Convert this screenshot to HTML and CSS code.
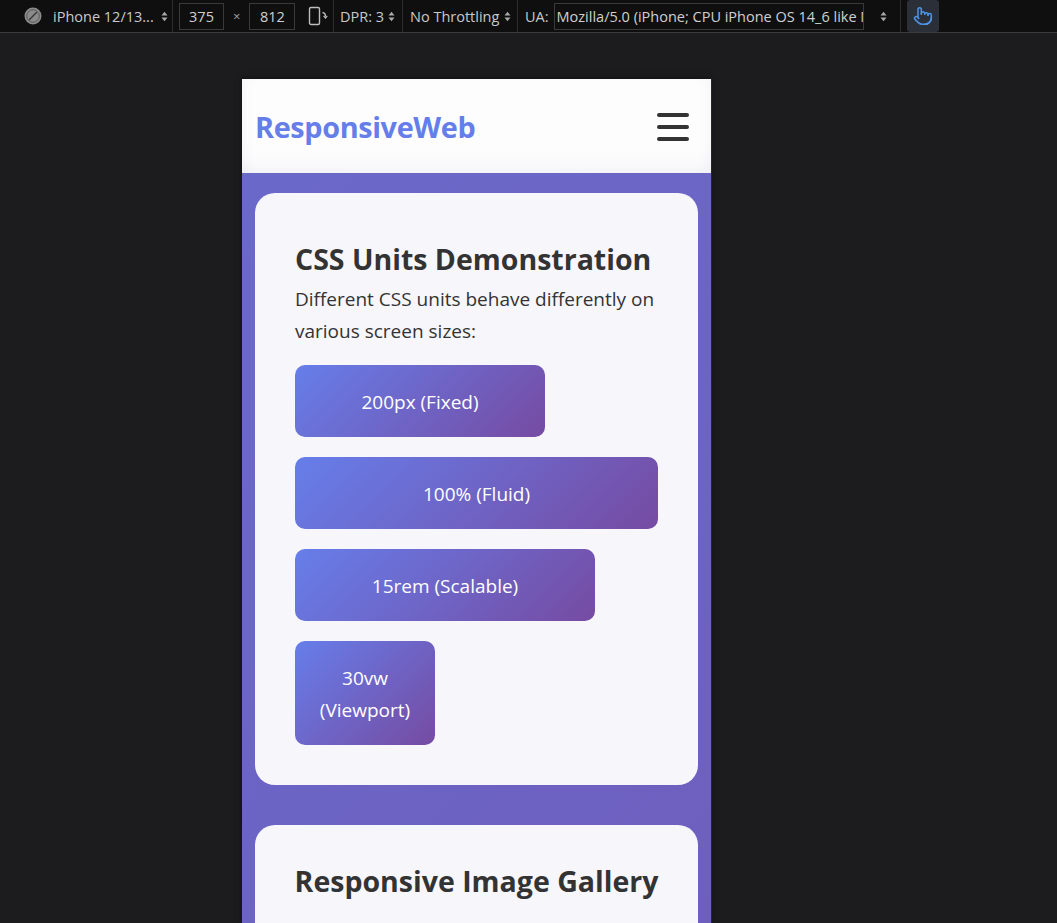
FILE: index.html
```html
<!DOCTYPE html>
<html lang="en">
<head>
<meta charset="utf-8">
<title>Responsive Web</title>
<link rel="stylesheet" href="styles.css">
</head>
<body>
<div class="toolbar">
  <div class="seg seg-device">
    <svg class="compass" width="18" height="18" viewBox="0 0 18 18"><circle cx="9" cy="9" r="8.5" fill="#8b8b8b"/><circle cx="9" cy="9" r="6.3" fill="none" stroke="#5a5a5a" stroke-width="1"/><path d="M12.5 5.5 L7.8 10.2 L5.5 12.5 L10.2 7.8 Z" fill="#3a3a3a" stroke="#3a3a3a" stroke-width="1.4" stroke-linejoin="round"/></svg>
    <span class="tb-text">iPhone 12/13...</span>
    <svg class="updown" width="7" height="11" viewBox="0 0 7 11"><path d="M0.5 4.5 L3.5 0.8 L6.5 4.5 Z M0.5 6.5 L3.5 10.2 L6.5 6.5 Z" fill="#a9a9a9"/></svg>
  </div>
  <div class="seg seg-size">
    <span class="tb-input w44">375</span>
    <span class="times">×</span>
    <span class="tb-input w45">812</span>
    <svg class="rotate" width="20" height="22" viewBox="0 0 20 22"><rect x="1.5" y="2.5" width="10" height="17" rx="1.5" fill="none" stroke="#bdbdbd" stroke-width="1.4"/><path d="M14.5 7.5 Q17.5 8 17.5 11.5" fill="none" stroke="#bdbdbd" stroke-width="1.3"/><path d="M15.6 10.8 L17.5 13 L19.2 10.8" fill="none" stroke="#bdbdbd" stroke-width="1.3"/></svg>
  </div>
  <div class="seg seg-dpr">
    <span class="tb-text">DPR: 3</span>
    <svg class="updown" width="7" height="11" viewBox="0 0 7 11"><path d="M0.5 4.5 L3.5 0.8 L6.5 4.5 Z M0.5 6.5 L3.5 10.2 L6.5 6.5 Z" fill="#a9a9a9"/></svg>
  </div>
  <div class="seg seg-throttle">
    <span class="tb-text">No Throttling</span>
    <svg class="updown" width="7" height="11" viewBox="0 0 7 11"><path d="M0.5 4.5 L3.5 0.8 L6.5 4.5 Z M0.5 6.5 L3.5 10.2 L6.5 6.5 Z" fill="#a9a9a9"/></svg>
  </div>
  <div class="seg seg-ua">
    <span class="tb-text">UA:</span>
    <span class="tb-input ua-input">Mozilla/5.0 (iPhone; CPU iPhone OS 14_6 like Mac OS X)</span>
    <svg class="updown ua-arrows" width="7" height="11" viewBox="0 0 7 11"><path d="M0.5 4.5 L3.5 0.8 L6.5 4.5 Z M0.5 6.5 L3.5 10.2 L6.5 6.5 Z" fill="#a9a9a9"/></svg>
  </div>
  <div class="seg seg-touch">
    <span class="touch-btn">
      <svg width="20" height="20" viewBox="0 0 24 24" fill="none" stroke="#4f93e6" stroke-width="1.8" stroke-linecap="round" stroke-linejoin="round"><path d="M22 14a8 8 0 0 1-8 8"/><path d="M18 11v-1a2 2 0 0 0-2-2a2 2 0 0 0-2 2"/><path d="M14 10V9a2 2 0 0 0-2-2a2 2 0 0 0-2 2v1"/><path d="M10 9.5V4a2 2 0 0 0-2-2a2 2 0 0 0-2 2v10"/><path d="M18 11a2 2 0 1 1 4 0v3a8 8 0 0 1-8 8h-2c-2.8 0-4.5-.86-5.990-2.34l-3.6-3.6a2 2 0 0 1 2.83-2.82L7 15"/></svg>
    </span>
  </div>
</div>

<div class="stage">
  <div class="device">
    <header class="site-header">
      <div class="logo">ResponsiveWeb</div>
      <div class="burger"><span></span><span></span><span></span></div>
    </header>
    <main class="content">
      <section class="card">
        <h2 class="card-title">CSS Units Demonstration</h2>
        <p class="card-text">Different CSS units behave differently on various screen sizes:</p>
        <div class="units">
          <div class="unit u-px">200px (Fixed)</div>
          <div class="unit u-pct">100% (Fluid)</div>
          <div class="unit u-rem">15rem (Scalable)</div>
          <div class="unit u-vw">30vw (Viewport)</div>
        </div>
      </section>
      <section class="card card-gallery">
        <h2 class="card-title centered">Responsive Image Gallery</h2>
      </section>
    </main>
  </div>
</div>
</body>
</html>
```

FILE: styles.css
```css
* { box-sizing: border-box; }

html, body {
  margin: 0;
  height: 100%;
  overflow: hidden;
}

body {
  background: #1c1c1e;
  font-family: "Open Sans", "Noto Sans", sans-serif;
  display: flex;
  flex-direction: column;
}

/* ---------- devtools toolbar ---------- */
.toolbar {
  height: 33px;
  flex: none;
  background: #0f0f10;
  border-bottom: 1px solid #3b3b3d;
  display: flex;
  align-items: stretch;
  color: #c9c9c9;
  font-size: 14.5px;
}

.seg {
  display: flex;
  align-items: center;
  border-right: 1px solid #2c2c2e;
  flex: none;
}

.seg-device { width: 173px; padding-left: 24px; }
.seg-device .tb-text { margin-left: 11px; }
.seg-device .updown { margin-left: 7px; }

.seg-size { width: 161px; padding-left: 6px; }
.seg-dpr { width: 69px; padding-left: 6px; }
.seg-dpr .updown { margin-left: 4px; }
.seg-throttle { width: 115px; padding-left: 7px; }
.seg-throttle .updown { margin-left: 5px; }
.seg-ua { width: 383px; padding-left: 7px; }
.seg-touch { border-right: none; padding-left: 6px; }

.tb-input {
  height: 27px;
  border: 1px solid #3a3a3c;
  display: flex;
  align-items: center;
  justify-content: center;
  color: #cfcfcf;
}
.w44 { width: 45px; }
.w45 { width: 46px; }
.times { margin: 0 9px; color: #a0a0a0; font-size: 13px; }
.rotate { margin-left: 13px; }

.ua-input {
  width: 310px;
  margin-left: 5px;
  justify-content: flex-start;
  padding-left: 2px;
  white-space: nowrap;
  overflow: hidden;
}
.ua-arrows { margin-left: 16px; }

.touch-btn {
  width: 32px;
  height: 32px;
  background: #2a2f38;
  border-radius: 3px;
  display: flex;
  align-items: center;
  justify-content: center;
}

/* ---------- emulated device ---------- */
.stage {
  flex: 1;
  padding: 46px 0 0 242px;
  overflow: hidden;
}

.device {
  width: 469px;
  height: 100%;
  background: linear-gradient(135deg, #6a69ca 0%, #6c64c4 60%, #6e5fbe 100%);
  overflow: hidden;
  box-shadow: 1px 0 0 #26262c, 0 0 6px rgba(0, 0, 0, 0.5);
}

.site-header {
  height: 94px;
  background: #fdfdfe;
  box-shadow: inset 0 -14px 22px -12px rgba(60, 60, 110, 0.07), inset 10px 0 18px -12px rgba(60,60,110,0.06), inset -10px 0 18px -12px rgba(60,60,110,0.06);
  display: flex;
  align-items: center;
  justify-content: space-between;
  padding: 0 22px 0 13px;
}

.logo {
  color: #667eea;
  font-weight: 700;
  font-size: 28.8px;
  letter-spacing: -0.35px;
  padding-top: 1px;
}

.burger {
  width: 32px;
  display: flex;
  flex-direction: column;
  gap: 8px;
  padding-top: 1px;
}
.burger span {
  height: 4px;
  border-radius: 2px;
  background: #333;
}

.content {
  padding: 20px 13px;
  display: flex;
  flex-direction: column;
  gap: 40px;
}

.card {
  background: #f7f6fb;
  border-radius: 20px;
  padding: 40px;
}

.card-title {
  margin: 5px 0 2px;
  color: #333;
  font-size: 28.5px;
  font-weight: 700;
  line-height: 1.5;
}
.card-title.centered { text-align: center; white-space: nowrap; }

.card-text {
  margin: 0 0 18px;
  color: #333;
  font-size: 19px;
  line-height: 32px;
}

.units {
  display: flex;
  flex-direction: column;
  gap: 20px;
  align-items: flex-start;
}

.unit {
  background: linear-gradient(135deg, #667eea 0%, #764ba2 100%);
  color: #fff;
  border-radius: 10px;
  padding: 21px 10px 19px;
  text-align: center;
  font-size: 19px;
  line-height: 32px;
}
.u-px { width: 250px; }
.u-pct { width: 100%; }
.u-rem { width: 300px; }
.u-vw { width: 140px; }

.card-gallery {
  padding: 30px 20px;
  min-height: 240px;
}
```
